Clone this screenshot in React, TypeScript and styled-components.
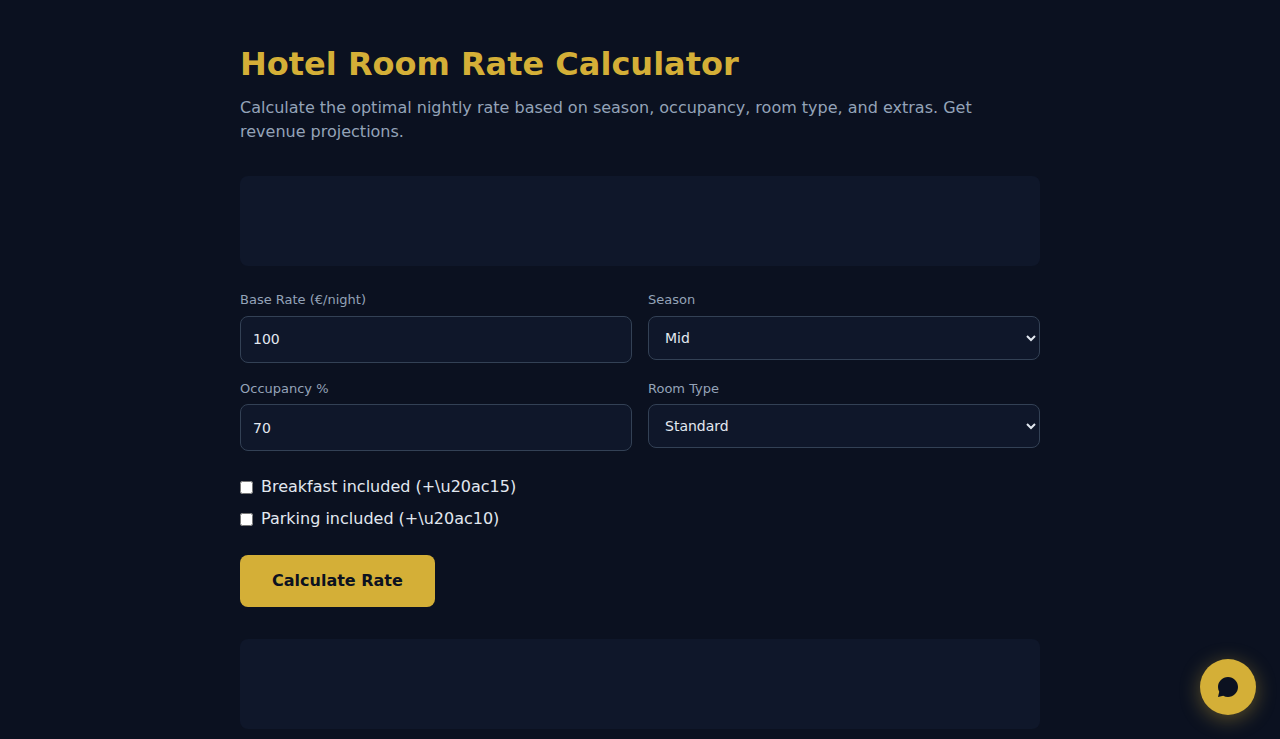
import React, { useState } from "react";
import styled, { createGlobalStyle, css } from "styled-components";

const GlobalStyle = createGlobalStyle`
  *, *::before, *::after { box-sizing: border-box; }
  body {
    margin: 0;
    background: #0b1120;
    color: #e2e8f0;
    font-family: "DejaVu Sans", sans-serif;
    font-size: 16px;
    line-height: 1.5;
  }
  html { scrollbar-width: none; }
`;

const Page = styled.main`
  max-width: 832px;
  margin: 0 auto;
  padding: 40px 16px 10px;
`;

const Title = styled.h1`
  margin: 0 0 8px;
  color: #d4af37;
  font-size: 32px;
  font-weight: 700;
`;

const Intro = styled.p`
  margin: 0 0 32px;
  color: #94a3b8;
`;

const Slot = styled.div`
  height: 90px;
  border-radius: 8px;
  background: #0f172a;
`;

const Form = styled.form`
  margin: 24px 0 32px;
`;

const Fields = styled.div`
  display: grid;
  grid-template-columns: 1fr 1fr;
  gap: 16px;
`;

const Field = styled.div`
  display: flex;
  flex-direction: column;
`;

const Label = styled.label`
  margin-bottom: 6px;
  color: #94a3b8;
  font-size: 13px;
`;

const control = css`
  width: 100%;
  border: 1px solid #334155;
  border-radius: 8px;
  background: #0f172a;
  color: #e2e8f0;
  font-family: inherit;
  font-size: 14px;
`;

const Input = styled.input`
  ${control}
  height: 47px;
  padding: 12px;
`;

const Select = styled.select`
  ${control}
  height: 44px;
  padding: 12px;
`;

const Extras = styled.div`
  display: flex;
  flex-direction: column;
  align-items: flex-start;
  gap: 8px;
  margin: 24px 0;
`;

const Extra = styled.label`
  display: flex;
  align-items: center;
  gap: 8px;
`;

const Checkbox = styled.input`
  margin: 0;
`;

const Submit = styled.button`
  padding: 14px 32px;
  border: 0;
  border-radius: 8px;
  background: #d4af37;
  color: #0b1120;
  font: inherit;
  font-weight: 700;
  cursor: pointer;
`;

const ChatButton = styled.button`
  position: fixed;
  right: 24px;
  bottom: 24px;
  display: grid;
  place-items: center;
  width: 56px;
  height: 56px;
  padding: 0;
  border: 0;
  border-radius: 50%;
  background: #d4af37;
  color: #0b1120;
  box-shadow: 0 4px 20px rgba(212, 175, 55, 0.4);
  cursor: pointer;
`;

export default function App() {
  const [rate, setRate] = useState("100");
  const [occupancy, setOccupancy] = useState("70");

  return (
    <>
      <GlobalStyle />
      <Page>
        <Title>Hotel Room Rate Calculator</Title>
        <Intro>
          Calculate the optimal nightly rate based on season, occupancy, room type, and extras. Get
          revenue projections.
        </Intro>
        <Slot />
        <Form onSubmit={(e) => e.preventDefault()}>
          <Fields>
            <Field>
              <Label htmlFor="rate">Base Rate (€/night)</Label>
              <Input id="rate" type="number" value={rate} onChange={(e) => setRate(e.target.value)} />
            </Field>
            <Field>
              <Label htmlFor="season">Season</Label>
              <Select id="season" defaultValue="Mid">
                <option>Low</option>
                <option>Mid</option>
                <option>High</option>
              </Select>
            </Field>
            <Field>
              <Label htmlFor="occupancy">Occupancy %</Label>
              <Input
                id="occupancy"
                type="number"
                value={occupancy}
                onChange={(e) => setOccupancy(e.target.value)}
              />
            </Field>
            <Field>
              <Label htmlFor="room">Room Type</Label>
              <Select id="room" defaultValue="Standard">
                <option>Standard</option>
                <option>Deluxe</option>
                <option>Suite</option>
              </Select>
            </Field>
          </Fields>
          <Extras>
            <Extra>
              <Checkbox type="checkbox" />
              {"Breakfast included (+\\u20ac15)"}
            </Extra>
            <Extra>
              <Checkbox type="checkbox" />
              {"Parking included (+\\u20ac10)"}
            </Extra>
          </Extras>
          <Submit type="submit">Calculate Rate</Submit>
        </Form>
        <Slot />
      </Page>
      <ChatButton type="button" aria-label="Open chat">
        <svg width="24" height="24" viewBox="0 0 24 24" fill="currentColor" aria-hidden="true">
          <path d="M12 2C6.48 2 2 6.48 2 12c0 1.74.45 3.37 1.23 4.79L2 22l5.21-1.23A9.96 9.96 0 0 0 12 22c5.52 0 10-4.48 10-10S17.52 2 12 2z" />
        </svg>
      </ChatButton>
    </>
  );
}
